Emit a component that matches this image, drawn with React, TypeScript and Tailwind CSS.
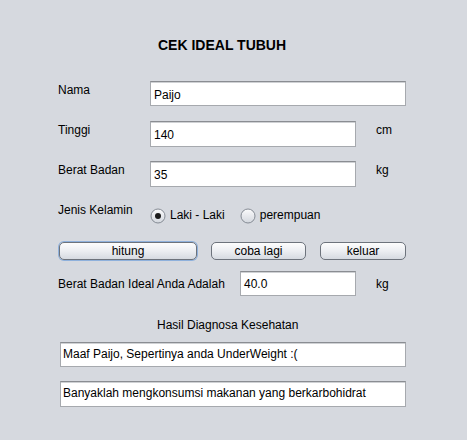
import React from "react";

function Field({ w, h, value, pad, pl = "pl-[3px]" }: { w: string; h: string; value: string; pad: string; pl?: string }) {
  return (
    <div
      className={`${w} ${h} ${pad} ${pl} shrink-0 bg-white border border-[#a6a9ae] border-t-[#8a8d92] shadow-[inset_0_1px_0_#cfd1d4] leading-4 whitespace-nowrap overflow-hidden`}
    >
      {value}
    </div>
  );
}

function Radio({ checked }: { checked: boolean }) {
  return (
    <svg width="16" height="16" viewBox="0 0 16 16" className="shrink-0">
      <defs>
        <linearGradient id={checked ? "rg1" : "rg2"} x1="0" y1="0" x2="0" y2="1">
          <stop offset="0" stopColor="#fbfbfc" />
          <stop offset="1" stopColor="#d3d7de" />
        </linearGradient>
      </defs>
      <circle cx="8" cy="8" r="7" fill={`url(#${checked ? "rg1" : "rg2"})`} stroke="#858b94" strokeWidth="1" />
      {checked && <circle cx="8" cy="8" r="3" fill="#1c1c1c" />}
    </svg>
  );
}

function Btn({ w, label, focus }: { w: string; label: string; focus?: boolean }) {
  return (
    <div
      className={`${w} h-[18px] shrink-0 rounded-[5px] border border-[#6d737c] bg-linear-to-b from-[#fdfdfd] via-[#eceef2] to-[#d6dae1] flex items-center justify-center leading-4 ${
        focus ? "ring-1 ring-[#8fb1dc]" : ""
      }`}
    >
      {label}
    </div>
  );
}

export default function App() {
  return (
    <div
      className="w-[467px] h-[440px] bg-[#d6d9df] text-[12px] text-black flex flex-col"
      style={{ fontFamily: '"Liberation Sans", Arial, sans-serif' }}
    >
      <div className="pt-[37px] pl-[158px] leading-4 text-[14px] font-bold">CEK IDEAL TUBUH</div>

      <div className="mt-[28px] pl-[58px] flex">
        <div className="w-[92px] pt-[1px] leading-4">Nama</div>
        <Field w="w-[256px]" h="h-[25px]" value="Paijo" pad="pt-[5px]" />
      </div>

      <div className="mt-[15px] pl-[58px] flex">
        <div className="w-[92px] pt-[1px] leading-4">Tinggi</div>
        <Field w="w-[206px]" h="h-[26px]" value="140" pad="pt-[5px]" />
        <div className="ml-[20px] pt-[1px] leading-4">cm</div>
      </div>

      <div className="mt-[14px] pl-[58px] flex">
        <div className="w-[92px] pt-[1px] leading-4">Berat Badan</div>
        <Field w="w-[206px]" h="h-[26px]" value="35" pad="pt-[5px]" />
        <div className="ml-[20px] pt-[1px] leading-4">kg</div>
      </div>

      <div className="mt-[15px] pl-[58px] flex h-[22px]">
        <div className="w-[92px] leading-4">Jenis Kelamin</div>
        <div className="mt-[6px]">
          <Radio checked />
        </div>
        <div className="ml-[4px] mt-[5px] leading-4">Laki - Laki</div>
        <div className="ml-[15px] mt-[6px]">
          <Radio checked={false} />
        </div>
        <div className="ml-[4px] mt-[5px] leading-4">perempuan</div>
      </div>

      <div className="mt-[18px] pl-[59px] flex gap-[14px]">
        <Btn w="w-[138px]" label="hitung" focus />
        <Btn w="w-[95px]" label="coba lagi" />
        <Btn w="w-[86px]" label="keluar" />
      </div>

      <div className="mt-[11px] pl-[58px] flex">
        <div className="w-[182px] pt-[5px] leading-4">Berat Badan Ideal Anda Adalah</div>
        <Field w="w-[116px]" h="h-[25px]" value="40.0" pad="pt-[4px]" />
        <div className="ml-[20px] pt-[5px] leading-4">kg</div>
      </div>

      <div className="mt-[21px] pl-[157px] leading-4">Hasil Diagnosa Kesehatan</div>

      <div className="mt-[9px] pl-[60px] flex">
        <Field w="w-[346px]" h="h-[25px]" value="Maaf Paijo, Sepertinya anda UnderWeight :(" pad="pt-[3px]" pl="pl-[2px]" />
      </div>

      <div className="mt-[14px] pl-[60px] flex">
        <Field w="w-[346px]" h="h-[26px]" value="Banyaklah mengkonsumsi makanan yang berkarbohidrat" pad="pt-[3px]" pl="pl-[2px]" />
      </div>
    </div>
  );
}
